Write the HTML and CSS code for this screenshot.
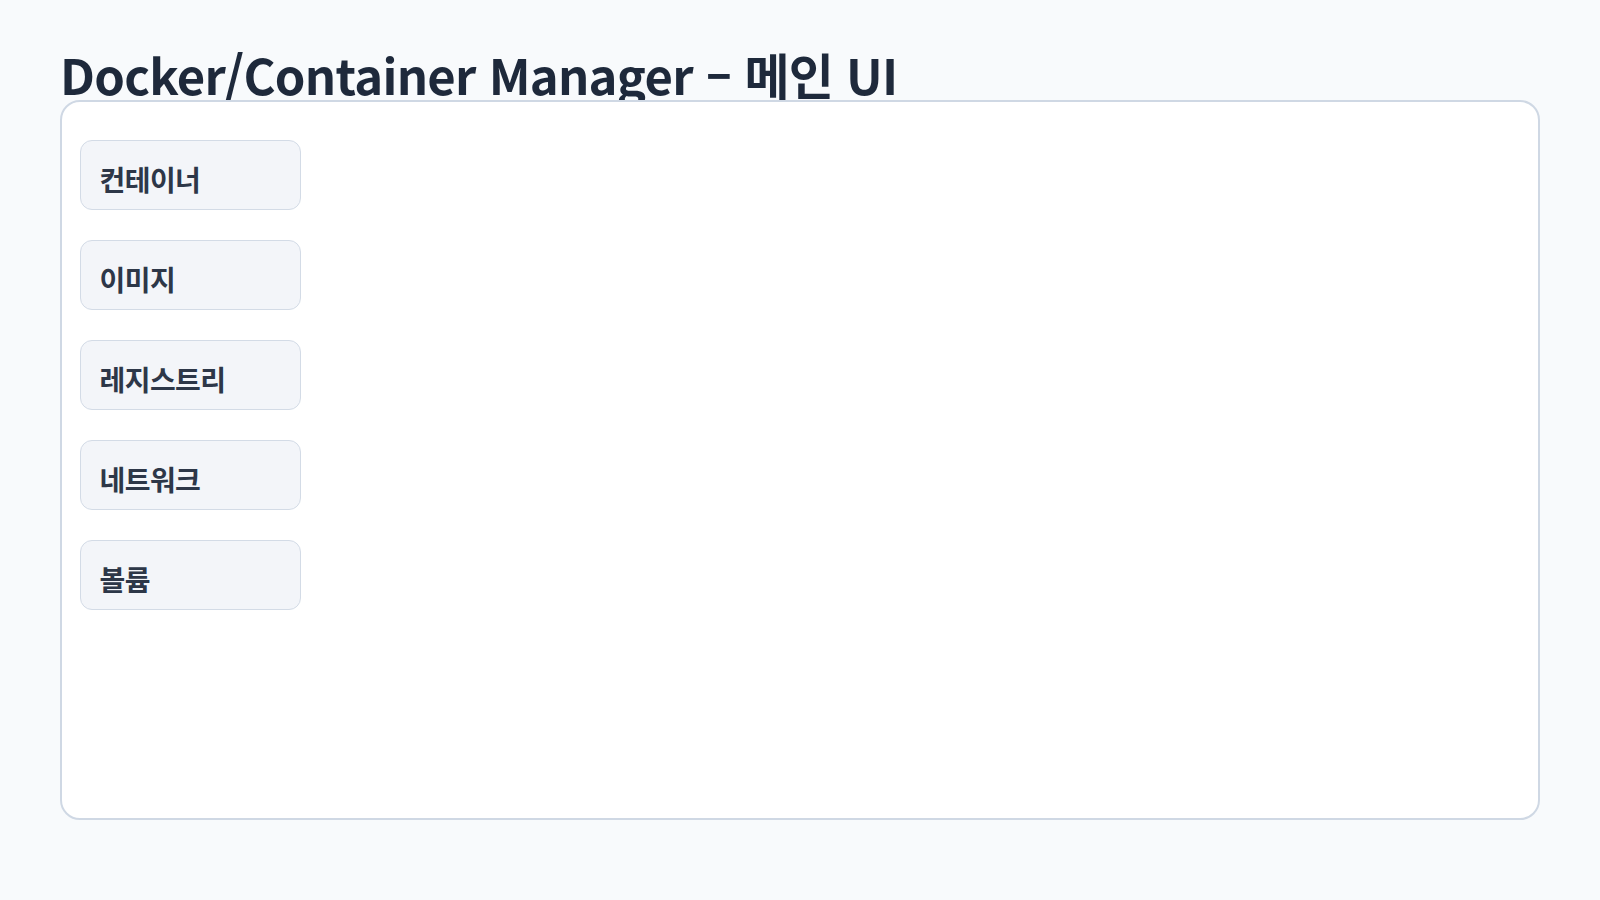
FILE: index.html
```html
<!DOCTYPE html>
<html lang="ko">
<head>
<meta charset="utf-8">
<title>Docker/Container Manager</title>
<link rel="stylesheet" href="styles.css">
</head>
<body>
<div class="page">
  <h1 class="title">Docker/Container Manager – 메인 UI</h1>
  <div class="panel">
    <nav class="menu">
      <div class="menu-item">컨테이너</div>
      <div class="menu-item">이미지</div>
      <div class="menu-item">레지스트리</div>
      <div class="menu-item">네트워크</div>
      <div class="menu-item">볼륨</div>
    </nav>
  </div>
</div>
</body>
</html>
```

FILE: styles.css
```css
html, body {
  margin: 0;
  padding: 0;
  background: #f8fafc;
}
body {
  font-family: "Noto Sans CJK KR", "Noto Sans", sans-serif;
  color: #1e293b;
}
.page {
  padding: 49px 60px 0;
}
.title {
  margin: 0;
  font-size: 49px;
  line-height: 49px;
  height: 51px;
  overflow: hidden;
  font-weight: 700;
  letter-spacing: -0.015em;
  color: #1e293b;
}
.panel {
  box-sizing: border-box;
  height: 720px;
  background: #ffffff;
  border: 2.5px solid #cfd8e4;
  border-radius: 20px;
  padding: 37.5px 17.5px;
}
.menu {
  display: flex;
  flex-direction: column;
  gap: 30px;
  width: 221px;
}
.menu-item {
  box-sizing: border-box;
  height: 70px;
  display: flex;
  align-items: center;
  padding: 8px 19px 0;
  background: #f3f5f9;
  border: 1.5px solid #d3dbe6;
  border-radius: 12px;
  font-size: 28px;
  font-weight: 700;
  letter-spacing: -0.02em;
  color: #2d3748;
}
```
